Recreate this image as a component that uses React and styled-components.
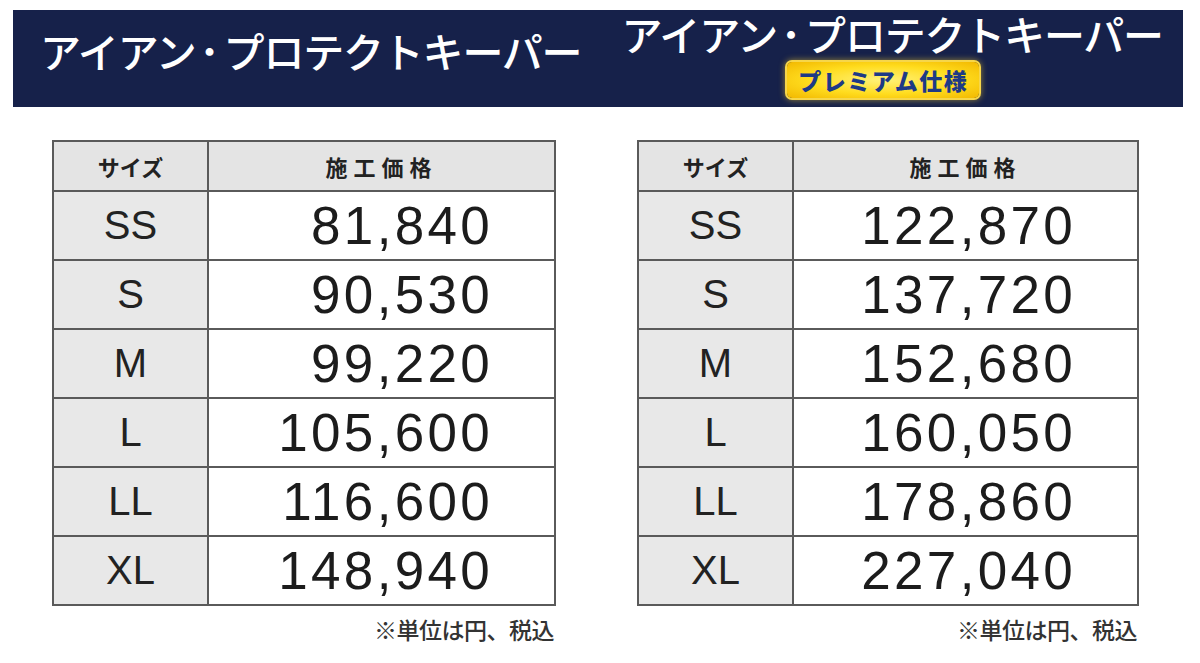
import styled, { createGlobalStyle } from "styled-components";

const tables = [
  {
    premium: false,
    prices: ["81,840", "90,530", "99,220", "105,600", "116,600", "148,940"],
  },
  {
    premium: true,
    prices: ["122,870", "137,720", "152,680", "160,050", "178,860", "227,040"],
  },
];

const sizes = ["SS", "S", "M", "L", "LL", "XL"];

export default function App() {
  return (
    <>
      <GlobalStyle />
      <Page>
        <Banner>
          {tables.map((t, i) => (
            <BannerCell key={i} $premium={t.premium}>
              <Title>
                アイアン<Dot>・</Dot>プロテクトキーパー
              </Title>
              {t.premium && <Badge>プレミアム仕様</Badge>}
            </BannerCell>
          ))}
        </Banner>
        <Columns>
          {tables.map((t, i) => (
            <Column key={i}>
              <PriceTable>
                <thead>
                  <tr>
                    <HeadCell $size>サイズ</HeadCell>
                    <HeadCell>施工価格</HeadCell>
                  </tr>
                </thead>
                <tbody>
                  {sizes.map((s, j) => (
                    <tr key={s}>
                      <SizeCell>{s}</SizeCell>
                      <PriceCell>{t.prices[j]}</PriceCell>
                    </tr>
                  ))}
                </tbody>
              </PriceTable>
              <Note>※単位は円、税込</Note>
            </Column>
          ))}
        </Columns>
      </Page>
    </>
  );
}

const GlobalStyle = createGlobalStyle`
  body {
    margin: 0;
    background: #ffffff;
    font-family: "Noto Sans CJK JP", "Noto Sans", sans-serif;
  }
`;

const Page = styled.div`
  width: 1200px;
  height: 663px;
  padding: 10px 17px 0 13px;
  box-sizing: border-box;
  overflow: hidden;
`;

const Banner = styled.div`
  height: 97px;
  background: #16214a;
  display: grid;
  grid-template-columns: 1fr 1fr;
  padding-left: 7px;
`;

const BannerCell = styled.div`
  display: flex;
  flex-direction: column;
  align-items: center;
  justify-content: ${(p) => (p.$premium ? "flex-start" : "center")};
  padding-bottom: ${(p) => (p.$premium ? "0" : "16px")};
  margin-top: ${(p) => (p.$premium ? "-2px" : "0")};
  min-width: 0;
`;

const Title = styled.div`
  color: #ffffff;
  font-size: 41px;
  font-weight: 500;
  line-height: 50px;
  white-space: nowrap;
  letter-spacing: -1.2px;
`;

const Dot = styled.span`
  font-size: 28px;
  font-weight: 900;
  letter-spacing: 0;
  vertical-align: 5px;
`;

const Badge = styled.div`
  margin-top: 3px;
  margin-right: 18px;
  padding: 0 11px;
  height: 36px;
  line-height: 36px;
  border-radius: 5px;
  background: radial-gradient(ellipse at center, #fff27a 0%, #ffdc1e 55%, #f2b800 100%);
  box-shadow: 0 0 0 2px #f6d64a, 0 0 6px 2px rgba(255, 210, 40, 0.55);
  color: #1d3a86;
  font-size: 23px;
  font-weight: 900;
  white-space: nowrap;
  letter-spacing: 1.5px;
`;

const Columns = styled.div`
  display: grid;
  grid-template-columns: 504px 502px;
  column-gap: 81px;
  margin: 33px 0 0 39px;
`;

const Column = styled.div`
  display: flex;
  flex-direction: column;
`;

const PriceTable = styled.table`
  width: 100%;
  border-collapse: collapse;
  border: 2px solid #5a5a5a;
  table-layout: fixed;
`;

const HeadCell = styled.th`
  width: ${(p) => (p.$size ? "153px" : "auto")};
  height: 48px;
  padding: 0;
  background: #e4e4e4;
  border: 2px solid #5a5a5a;
  color: #222;
  font-size: 22px;
  font-weight: 700;
  letter-spacing: ${(p) => (p.$size ? "0" : "6px")};
  text-align: center;
`;

const SizeCell = styled.td`
  height: 67px;
  padding: 0;
  background: #e8e8e8;
  border: 2px solid #5a5a5a;
  color: #222;
  font-family: "Liberation Sans", Arial, sans-serif;
  font-size: 40px;
  text-align: center;
`;

const PriceCell = styled.td`
  height: 67px;
  padding: 0 61px 0 0;
  background: #ffffff;
  border: 2px solid #5a5a5a;
  color: #1c1c1c;
  font-family: "Liberation Sans", Arial, sans-serif;
  font-size: 53px;
  letter-spacing: 3.3px;
  text-align: right;
`;

const Note = styled.div`
  margin-top: 6px;
  padding-right: 2px;
  text-align: right;
  color: #333;
  font-size: 23px;
  font-weight: 500;
  letter-spacing: -0.5px;
`;
